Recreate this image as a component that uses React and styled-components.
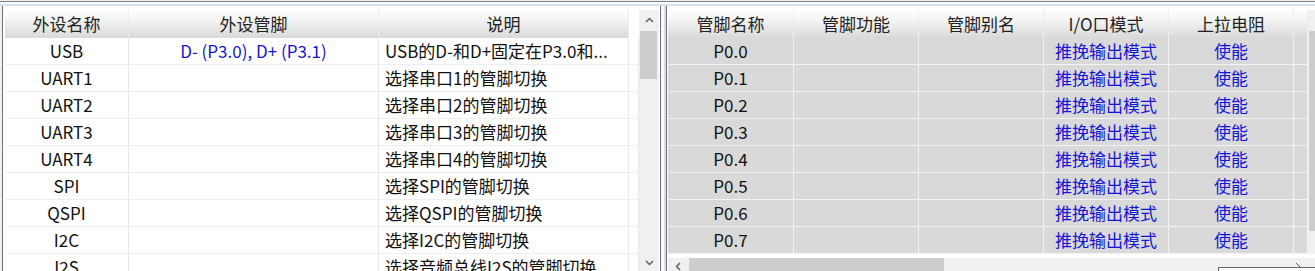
import React from 'react';
import styled, { createGlobalStyle } from 'styled-components';

const Global = createGlobalStyle`
  html, body { margin: 0; padding: 0; background: #f0f0f0; }
  body {
    font-family: "Noto Sans CJK SC", "Noto Sans", sans-serif;
    overflow: hidden;
  }
`;

const Window = styled.div`
  width: 1315px;
  height: 271px;
  overflow: hidden;
  display: flex;
  flex-direction: column;
  background: #f0f0f0;
  position: relative;
`;

const TopEdge = styled.div`
  flex: none;
  height: 4px;
  margin-top: 1px;
  border-top: 1px solid #808080;
  background: linear-gradient(to bottom, #fafbfc 0 2px, #d3e2f0 2px 4px);
`;

const Panes = styled.div`
  flex: 1;
  min-height: 0;
  display: flex;
  padding-left: 2px;
`;

const LeftPane = styled.div`
  flex: none;
  width: 659px;
  box-sizing: border-box;
  border-left: 1px solid #707070;
  border-right: 1px solid #707070;
  background: #fff;
  padding: 4px 1px 0 2px;
  display: flex;
  overflow: hidden;
`;

const Splitter = styled.div`
  flex: none;
  width: 5px;
  background: linear-gradient(to right, #f6f8fa 0 3px, #cfe1f1 3px 5px);
`;

const RightPane = styled.div`
  flex: 1;
  min-width: 0;
  border-left: 1px solid #707070;
  background: #fff;
  padding: 4px 0 0 1px;
  display: flex;
  flex-direction: column;
  overflow: hidden;
`;

const RightBody = styled.div`
  display: flex;
  height: 244px;
  flex: none;
`;

const Table = styled.div`
  flex: none;
  width: ${p => p.$width}px;
  overflow: hidden;
`;

const Row = styled.div`
  display: grid;
  grid-template-columns: ${p => p.$cols};
`;

const HeadCell = styled.div`
  height: 28px;
  box-sizing: border-box;
  border-right: 1px solid ${p => (p.$plain ? 'transparent' : '#ececec')};
  background: ${p => (p.$plain ? '#fff' : 'linear-gradient(to bottom, #ffffff 0%, #f4f4f4 35%, #d9d9d9 100%)')};
  color: #222;
  font-size: 17px;
  line-height: 27px;
  text-align: center;
  white-space: nowrap;
  overflow: hidden;
`;

const Cell = styled.div`
  height: 27px;
  box-sizing: border-box;
  background: ${p => (p.$gray ? '#d9d9d9' : '#fff')};
  border-bottom: 1px solid ${p => (p.$gray ? '#f3f3f3' : '#eceef2')};
  border-right: 1px solid ${p => (p.$gray ? '#f3f3f3' : '#e4e7ee')};
  color: ${p => (p.$blue ? '#1414d6' : '#111')};
  font-size: 17px;
  line-height: 26px;
  text-align: ${p => (p.$left ? 'left' : 'center')};
  padding-left: ${p => (p.$left ? '6px' : '0')};
  white-space: nowrap;
  overflow: hidden;
`;

const VScroll = styled.div`
  flex: none;
  width: 20px;
  display: flex;
  flex-direction: column;
  background: #f0f0f0;
`;

const Arrow = styled.div`
  flex: none;
  height: ${p => p.$h}px;
  display: flex;
  align-items: center;
  justify-content: center;
`;

const Thumb = styled.div`
  flex: none;
  height: ${p => p.$h}px;
  margin: 1px 2px 0 1px;
  background: #cdcdcd;
`;

const Track = styled.div`
  flex: 1;
`;

const Gap = styled.div`
  flex: none;
  height: 4px;
  background: #fff;
`;

const HScroll = styled.div`
  flex: 1;
  display: flex;
  background: #f0f0f0;
`;

const HArrow = styled.div`
  flex: none;
  width: 21px;
  display: flex;
  align-items: center;
  justify-content: center;
  padding-top: 3px;
`;

const HThumb = styled.div`
  flex: none;
  width: 255px;
  background: #cdcdcd;
`;

const Tip = styled.div`
  position: absolute;
  left: 1218px;
  top: 267px;
  width: 120px;
  height: 10px;
  border-top: 1px solid #6a6a6a;
  border-left: 1px solid #6a6a6a;
  background: #fff;
`;

const Grip = styled.svg`
  position: absolute;
  left: 1295px;
  top: 262px;
`;

const Chevron = ({ dir }) => {
  const pts = {
    up: '1,5 4.5,1.5 8,5',
    down: '1,1 4.5,4.5 8,1',
    left: '5,1 1.5,4.5 5,8',
  }[dir];
  const w = dir === 'left' ? 7 : 9;
  const h = dir === 'left' ? 9 : 6;
  return (
    <svg width={w} height={h} viewBox={`0 0 ${w} ${h}`}>
      <polyline points={pts} fill="none" stroke="#606060" strokeWidth="1.5" />
    </svg>
  );
};

const leftCols = '124px 250px 250px 10px';
const rightCols = '126px 125px 125px 125px 125px 14px';

const peripherals = [
  ['USB', 'D- (P3.0), D+ (P3.1)', 'USB的D-和D+固定在P3.0和...'],
  ['UART1', '', '选择串口1的管脚切换'],
  ['UART2', '', '选择串口2的管脚切换'],
  ['UART3', '', '选择串口3的管脚切换'],
  ['UART4', '', '选择串口4的管脚切换'],
  ['SPI', '', '选择SPI的管脚切换'],
  ['QSPI', '', '选择QSPI的管脚切换'],
  ['I2C', '', '选择I2C的管脚切换'],
  ['I2S', '', '选择音频总线I2S的管脚切换'],
];

const pins = ['P0.0', 'P0.1', 'P0.2', 'P0.3', 'P0.4', 'P0.5', 'P0.6', 'P0.7'];

export default function App() {
  return (
    <Window>
      <Global />
      <TopEdge />
      <Panes>
        <LeftPane>
          <Table $width={634}>
            <Row $cols={leftCols}>
              <HeadCell>外设名称</HeadCell>
              <HeadCell>外设管脚</HeadCell>
              <HeadCell>说明</HeadCell>
              <HeadCell $plain />
            </Row>
            {peripherals.map(([name, pin, desc]) => (
              <Row $cols={leftCols} key={name}>
                <Cell>{name}</Cell>
                <Cell $blue>{pin}</Cell>
                <Cell $left>{desc}</Cell>
                <Cell />
              </Row>
            ))}
          </Table>
          <VScroll>
            <Arrow $h={20}><Chevron dir="up" /></Arrow>
            <Thumb $h={48} />
            <Track />
            <Arrow $h={17}><Chevron dir="down" /></Arrow>
          </VScroll>
        </LeftPane>
        <Splitter />
        <RightPane>
          <RightBody>
            <Table $width={640}>
              <Row $cols={rightCols}>
                <HeadCell>管脚名称</HeadCell>
                <HeadCell>管脚功能</HeadCell>
                <HeadCell>管脚别名</HeadCell>
                <HeadCell>I/O口模式</HeadCell>
                <HeadCell>上拉电阻</HeadCell>
                <HeadCell />
              </Row>
              {pins.map(p => (
                <Row $cols={rightCols} key={p}>
                  <Cell $gray>{p}</Cell>
                  <Cell $gray />
                  <Cell $gray />
                  <Cell $gray $blue>推挽输出模式</Cell>
                  <Cell $gray $blue>使能</Cell>
                  <Cell $gray />
                </Row>
              ))}
            </Table>
            <VScroll>
              <Arrow $h={20} />
              <Thumb $h={200} />
              <Track />
            </VScroll>
          </RightBody>
          <Gap />
          <HScroll>
            <HArrow><Chevron dir="left" /></HArrow>
            <HThumb />
          </HScroll>
        </RightPane>
      </Panes>
      <Tip />
      <Grip width="8" height="8" viewBox="0 0 8 8">
        <line x1="1" y1="1" x2="6" y2="6" stroke="#555" strokeWidth="1" />
      </Grip>
    </Window>
  );
}
